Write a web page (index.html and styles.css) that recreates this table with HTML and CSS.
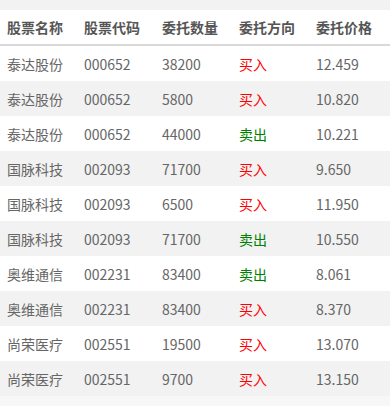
FILE: index.html
```html
<!DOCTYPE html>
<html lang="zh">
<head>
<meta charset="utf-8">
<link rel="stylesheet" href="styles.css">
</head>
<body>
<div class="page">
<table class="orders">
<colgroup>
<col class="c-name"><col class="c-code"><col class="c-qty"><col class="c-dir"><col class="c-price">
</colgroup>
<thead>
<tr><th>股票名称</th><th>股票代码</th><th>委托数量</th><th>委托方向</th><th>委托价格</th></tr>
</thead>
<tbody>
<tr><td>泰达股份</td><td>000652</td><td>38200</td><td class="buy">买入</td><td>12.459</td></tr>
<tr><td>泰达股份</td><td>000652</td><td>5800</td><td class="buy">买入</td><td>10.820</td></tr>
<tr><td>泰达股份</td><td>000652</td><td>44000</td><td class="sell">卖出</td><td>10.221</td></tr>
<tr><td>国脉科技</td><td>002093</td><td>71700</td><td class="buy">买入</td><td>9.650</td></tr>
<tr><td>国脉科技</td><td>002093</td><td>6500</td><td class="buy">买入</td><td>11.950</td></tr>
<tr><td>国脉科技</td><td>002093</td><td>71700</td><td class="sell">卖出</td><td>10.550</td></tr>
<tr><td>奥维通信</td><td>002231</td><td>83400</td><td class="sell">卖出</td><td>8.061</td></tr>
<tr><td>奥维通信</td><td>002231</td><td>83400</td><td class="buy">买入</td><td>8.370</td></tr>
<tr><td>尚荣医疗</td><td>002551</td><td>19500</td><td class="buy">买入</td><td>13.070</td></tr>
<tr><td>尚荣医疗</td><td>002551</td><td>9700</td><td class="buy">买入</td><td>13.150</td></tr>
</tbody>
</table>
</div>
</body>
</html>
```
FILE: styles.css
```css
html, body {
  margin: 0;
  padding: 0;
  background: #f7f7f7;
}
.page {
  padding-top: 10px;
  background: #f2f2f2;
  font-family: "Noto Sans CJK SC", "Noto Sans", sans-serif;
  font-size: 14px;
}
.orders {
  width: 390px;
  table-layout: fixed;
  border-collapse: collapse;
  border-spacing: 0;
}
.c-name { width: 77px; }
.c-code { width: 78px; }
.c-qty { width: 77px; }
.c-dir { width: 77px; }
.c-price { width: 81px; }
.orders th {
  height: 34px;
  padding: 0 0 0 7px;
  text-align: left;
  font-weight: bold;
  color: #555;
  background: #fff;
  border-bottom: 2px solid #d9d9d9;
}
.orders td {
  height: 35px;
  padding: 0 0 0 7px;
  color: #666;
}
.orders tbody tr:nth-child(odd) td { background: #fff; }
.orders tbody tr:nth-child(even) td { background: #f2f2f2; }
.orders td.buy { color: #f00; }
.orders td.sell { color: #008000; }
```
